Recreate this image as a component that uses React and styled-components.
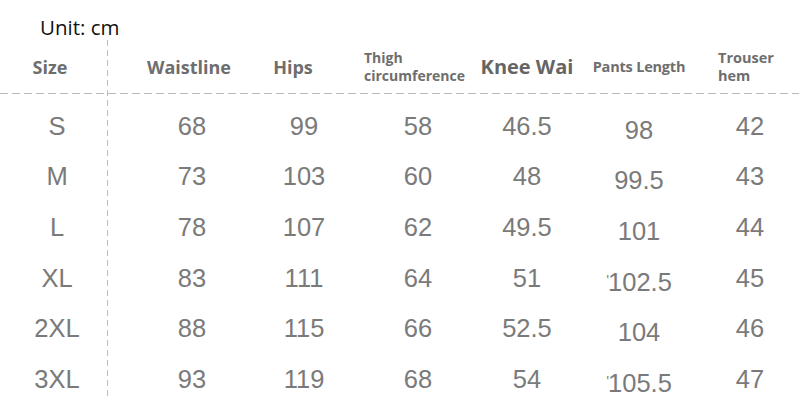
import React from 'react';
import styled, { createGlobalStyle } from 'styled-components';

const GlobalStyle = createGlobalStyle`
  html, body {
    margin: 0;
    padding: 0;
    background: #fff;
  }
`;

const columns = '108px 140px 112px 116px 102px 122px 100px';

const Page = styled.div`
  width: 799px;
  height: 409px;
  overflow: hidden;
  background: #fff;
`;

const Caption = styled.div`
  height: 40px;
  padding-left: 40px;
  padding-top: 13px;
  box-sizing: border-box;
  display: flex;
  align-items: center;
  font-family: 'Open Sans', 'Liberation Sans', sans-serif;
  font-size: 20.5px;
  color: #111;
`;

const Table = styled.div`
  background-image: repeating-linear-gradient(to bottom, #bdbdbd 0 6px, transparent 6px 10px);
  background-repeat: no-repeat;
  background-position: 107px 0;
  background-size: 1px 359px;
`;

const HeaderRow = styled.div`
  display: grid;
  grid-template-columns: ${columns};
  height: 54px;
  background-image: repeating-linear-gradient(to right, #b9b9b9 0 8px, transparent 8px 12px);
  background-repeat: no-repeat;
  background-position: 0 53px;
  background-size: 100% 1px;
`;

const HeadCell = styled.div`
  display: flex;
  align-items: center;
  justify-content: ${(p) => (p.$left ? 'flex-start' : 'center')};
  padding-left: ${(p) => p.$pl || 0}px;
  padding-right: ${(p) => p.$pr || 0}px;
  font-family: 'Open Sans', 'Liberation Sans', sans-serif;
  font-weight: 700;
  font-size: ${(p) => p.$size || 18}px;
  line-height: ${(p) => (p.$size && p.$size < 16 ? '18px' : '1')};
  letter-spacing: ${(p) => p.$ls || 0}px;
  color: ${(p) => p.$color || '#6e6e6e'};
  white-space: nowrap;
`;

const Body = styled.div`
  padding-top: 7px;
`;

const Row = styled.div`
  display: grid;
  grid-template-columns: ${columns};
  height: 50.6px;
`;

const Cell = styled.div`
  display: flex;
  align-items: center;
  justify-content: center;
  padding-left: ${(p) => p.$pl || 0}px;
  padding-top: ${(p) => p.$pt || 0}px;
  font-family: 'Liberation Sans', Arial, sans-serif;
  font-size: 25.5px;
  color: #7a7a7a;
`;

const Tick = styled.span`
  font-size: 15px;
  align-self: flex-start;
  margin-top: 10px;
  margin-right: -1px;
  color: #888;
`;

const rows = [
  ['S', '68', '99', '58', '46.5', '98', '42'],
  ['M', '73', '103', '60', '48', '99.5', '43'],
  ['L', '78', '107', '62', '49.5', '101', '44'],
  ['XL', '83', '111', '64', '51', '102.5', '45', true],
  ['2XL', '88', '115', '66', '52.5', '104', '46'],
  ['3XL', '93', '119', '68', '54', '105.5', '47', true],
];

export default function App() {
  return (
    <Page>
      <GlobalStyle />
      <Caption>Unit: cm</Caption>
      <Table>
        <HeaderRow>
          <HeadCell $pr={8}>Size</HeadCell>
          <HeadCell $pl={22}>Waistline</HeadCell>
          <HeadCell $pr={22}>Hips</HeadCell>
          <HeadCell $left $pl={4} $size={14}>
            <span>
              Thigh
              <br />
              circumference
            </span>
          </HeadCell>
          <HeadCell $size={20} $color="#656565">Knee Wai</HeadCell>
          <HeadCell $size={14.5} $ls={-0.2}>Pants Length</HeadCell>
          <HeadCell $left $pl={18} $size={14.5}>
            <span>
              Trouser
              <br />
              hem
            </span>
          </HeadCell>
        </HeaderRow>
        <Body>
          {rows.map(([size, waist, hips, thigh, knee, length, hem, tick]) => (
            <Row key={size}>
              <Cell $pl={6}>{size}</Cell>
              <Cell $pl={28}>{waist}</Cell>
              <Cell>{hips}</Cell>
              <Cell>{thigh}</Cell>
              <Cell>{knee}</Cell>
              <Cell $pt={8}>
                {tick && <Tick>'</Tick>}
                {length}
              </Cell>
              <Cell>{hem}</Cell>
            </Row>
          ))}
        </Body>
      </Table>
    </Page>
  );
}
